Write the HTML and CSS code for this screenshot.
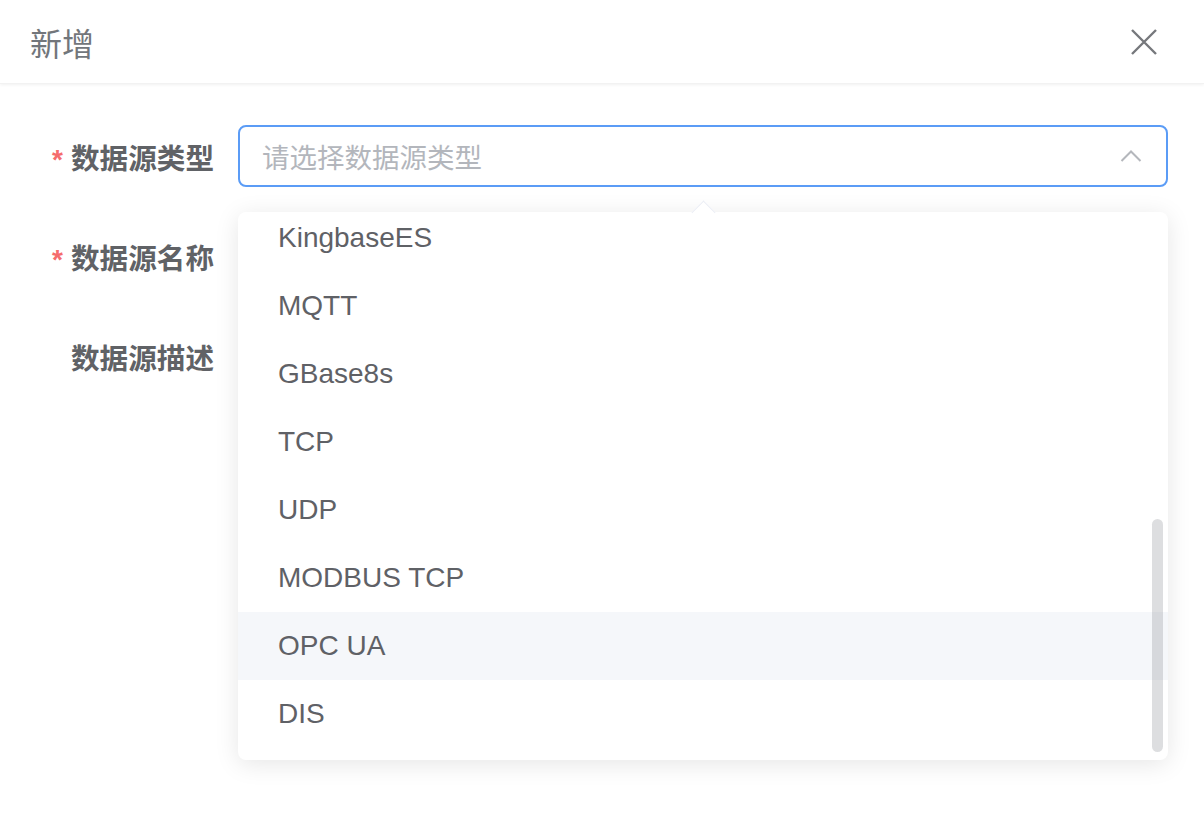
FILE: index.html
```html
<!DOCTYPE html>
<html lang="zh-CN">
<head>
<meta charset="utf-8">
<title>新增</title>
<link rel="stylesheet" href="styles.css">
</head>
<body>
<div class="dialog">
  <header class="dialog-header">
    <span class="dialog-title">新增</span>
    <button class="close-btn" aria-label="关闭">
      <svg width="28" height="28" viewBox="0 0 28 28"><path d="M2 2 L26 26 M26 2 L2 26" stroke="#76787c" stroke-width="2.4" fill="none"/></svg>
    </button>
  </header>
  <form class="form">
    <div class="form-item">
      <label class="form-label required">数据源类型</label>
      <div class="form-control select">
        <div class="input is-focus">
          <span class="placeholder">请选择数据源类型</span>
          <svg class="arrow-icon" width="22" height="14" viewBox="0 0 22 14"><path d="M1.5 12 L11 2.5 L20.5 12" stroke="#b4b7bc" stroke-width="2" fill="none"/></svg>
        </div>
        <div class="dropdown">
          <div class="popper-arrow"></div>
          <div class="dropdown-wrap">
            <ul class="dropdown-list">
              <li class="option">KingbaseES</li>
              <li class="option">MQTT</li>
              <li class="option">GBase8s</li>
              <li class="option">TCP</li>
              <li class="option">UDP</li>
              <li class="option">MODBUS TCP</li>
              <li class="option hover">OPC UA</li>
              <li class="option">DIS</li>
            </ul>
            <div class="scroll-thumb"></div>
          </div>
        </div>
      </div>
    </div>
    <div class="form-item">
      <label class="form-label required">数据源名称</label>
      <div class="form-control"></div>
    </div>
    <div class="form-item">
      <label class="form-label">数据源描述</label>
      <div class="form-control"></div>
    </div>
  </form>
</div>
</body>
</html>
```

FILE: styles.css
```css
* { box-sizing: border-box; }
html, body {
  margin: 0;
  padding: 0;
  background: #ffffff;
  height: 100%;
  overflow: hidden;
}
body {
  font-family: "Liberation Sans", "Noto Sans CJK SC", sans-serif;
  color: #606266;
}
.dialog {
  width: 1204px;
  height: 818px;
  background: #fff;
}
.dialog-header {
  height: 84px;
  display: flex;
  align-items: center;
  justify-content: space-between;
  padding: 0 46px 0 30px;
  box-shadow: 0 1px 3px rgba(0, 0, 0, 0.06);
  border-bottom: 1px solid #f2f2f2;
}
.dialog-title {
  font-family: "Noto Sans CJK SC", sans-serif;
  font-size: 32px;
  color: #72767b;
  line-height: 1;
}
.close-btn {
  border: 0;
  background: none;
  padding: 0;
  width: 28px;
  height: 28px;
  display: flex;
}
.form {
  padding: 41px 36px 0 38px;
  display: flex;
  flex-direction: column;
  gap: 38px;
}
.form-item {
  display: flex;
  align-items: center;
  height: 62px;
}
.form-label {
  width: 200px;
  padding-right: 24px;
  text-align: right;
  font-family: "Noto Sans CJK SC", sans-serif;
  font-weight: 700;
  font-size: 28.6px;
  color: #606266;
  flex-shrink: 0;
  white-space: nowrap;
}
.form-label.required::before {
  content: "*";
  color: #f56c6c;
  margin-right: 8px;
  font-family: "Liberation Sans", sans-serif;
  font-weight: 700;
  font-size: 28px;
}
.form-control {
  flex: 1;
  position: relative;
  height: 62px;
}
.input {
  height: 62px;
  border: 2px solid #5b9cf6;
  border-radius: 8px;
  display: flex;
  align-items: center;
  justify-content: space-between;
  padding: 0 24px 0 22px;
}
.placeholder {
  font-family: "Noto Sans CJK SC", sans-serif;
  font-size: 27.5px;
  color: #b3b6bc;
}
.arrow-icon { display: block; }
.dropdown {
  position: absolute;
  top: 87px;
  left: 0;
  right: 0;
  z-index: 10;
}
.popper-arrow {
  position: absolute;
  top: -12px;
  left: 50%;
  width: 17px;
  height: 17px;
  margin-left: -8px;
  background: #fff;
  border-left: 1px solid #ebeef5;
  border-top: 1px solid #ebeef5;
  transform: translateY(4px) rotate(45deg);
  z-index: 2;
}
.dropdown-wrap {
  position: relative;
  height: 548px;
  background: #fff;
  border-radius: 8px;
  box-shadow: 0 4px 24px rgba(0, 0, 0, 0.1);
  overflow: hidden;
}
.dropdown-list {
  list-style: none;
  margin: -8px 0 0 0;
  padding: 0 0 12px 0;
}
.option {
  height: 68px;
  line-height: 68px;
  padding: 0 40px;
  font-size: 28px;
  color: #5f6166;
  font-family: "Liberation Sans", sans-serif;
}
.option.hover {
  background: #f5f7fa;
}
.scroll-thumb {
  position: absolute;
  right: 5px;
  top: 307px;
  width: 11px;
  height: 233px;
  border-radius: 6px;
  background: rgba(144, 147, 153, 0.3);
}
```
